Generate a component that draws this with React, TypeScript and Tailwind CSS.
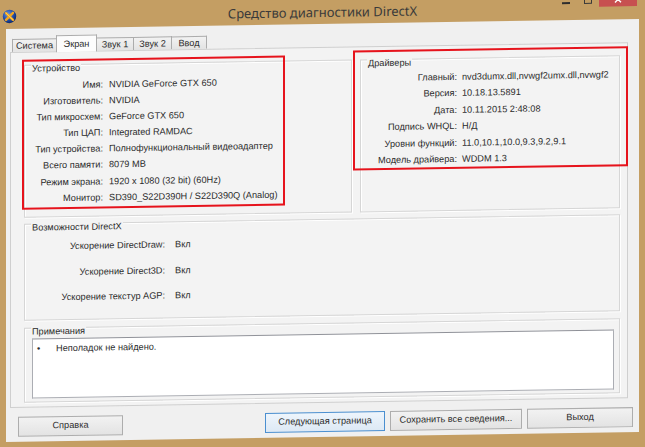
import React from 'react';

const ui = "font-['Liberation_Sans',Arial,sans-serif] text-[9.2px] text-[#2b2b2b]";

const deviceRows: [string, string][] = [
  ['Имя:', 'NVIDIA GeForce GTX 650'],
  ['Изготовитель:', 'NVIDIA'],
  ['Тип микросхем:', 'GeForce GTX 650'],
  ['Тип ЦАП:', 'Integrated RAMDAC'],
  ['Тип устройства:', 'Полнофункциональный видеоадаптер'],
  ['Всего памяти:', '8079 MB'],
  ['Режим экрана:', '1920 x 1080 (32 bit) (60Hz)'],
  ['Монитор:', 'SD390_S22D390H / S22D390Q (Analog)'],
];

const driverRows: [string, string][] = [
  ['Главный:', 'nvd3dumx.dll,nvwgf2umx.dll,nvwgf2'],
  ['Версия:', '10.18.13.5891'],
  ['Дата:', '10.11.2015 2:48:08'],
  ['Подпись WHQL:', 'Н/Д'],
  ['Уровни функций:', '11.0,10.1,10.0,9.3,9.2,9.1'],
  ['Модель драйвера:', 'WDDM 1.3'],
];

const dxRows: [string, string][] = [
  ['Ускорение DirectDraw:', 'Вкл'],
  ['Ускорение Direct3D:', 'Вкл'],
  ['Ускорение текстур AGP:', 'Вкл'],
];

function Group({ label, className, children }: { label: string; className: string; children?: React.ReactNode }) {
  return (
    <div className={`relative border border-[#d6d6d6] shadow-[inset_1px_1px_0_#fff,1px_1px_0_#fff] ${className}`}>
      <span className="absolute -top-[2px] left-[6px] px-[1px] bg-[#f3f3f3] leading-[11px]">{label}</span>
      {children}
    </div>
  );
}

function DxIcon() {
  return (
    <svg width="15" height="15" viewBox="0 0 16 16">
      <defs>
        <radialGradient id="dxg" cx="0.4" cy="0.35" r="0.7">
          <stop offset="0" stopColor="#6f9be0" />
          <stop offset="0.6" stopColor="#1f4aa8" />
          <stop offset="1" stopColor="#0c245e" />
        </radialGradient>
      </defs>
      <circle cx="8" cy="8" r="7.2" fill="url(#dxg)" />
      <path d="M4.3 4.3 L11.7 11.7 M11.7 4.3 L4.3 11.7" stroke="#f2a51e" strokeWidth="2.6" strokeLinecap="round" />
      <path d="M4.3 4.3 L11.7 11.7" stroke="#ffd35a" strokeWidth="1" strokeLinecap="round" />
    </svg>
  );
}

function Tab({ label, w, active }: { label: string; w: string; active?: boolean }) {
  if (active) {
    return (
      <div className={`${w} relative z-10 -mb-px -ml-px h-[17px] border border-b-0 border-[#acacac] bg-[#fcfcfc] flex items-start justify-center pt-[3px] leading-[11px]`}>
        {label}
      </div>
    );
  }
  return (
    <div className={`${w} -ml-px first:ml-0 h-[13px] border border-b-0 border-[#acacac] bg-gradient-to-b from-[#f2f2f2] to-[#e3e3e3] flex items-center justify-center leading-[11px]`}>
      {label}
    </div>
  );
}

function Button({ label, w, isDefault }: { label: string; w: string; isDefault?: boolean }) {
  return (
    <div
      className={`${w} h-[20px] flex items-center justify-center border ${
        isDefault
          ? 'border-[#4a8fd0] bg-gradient-to-b from-[#eef5fc] to-[#dde9f5]'
          : 'border-[#adadad] bg-gradient-to-b from-[#f2f2f2] to-[#e3e3e3]'
      }`}
    >
      {label}
    </div>
  );
}

export default function App() {
  return (
    <div className={`w-[645px] h-[447px] overflow-hidden bg-[#c49e63] ${ui}`}>
      <div className="relative w-[645px] h-[447px] skew-y-[-0.9deg]">
        {/* title bar */}
        <div className="h-[24px] grid grid-cols-[1fr_auto_1fr] items-start">
          <div className="ml-[2px] mt-[4px]">
            <DxIcon />
          </div>
          <div className="font-['Noto_Sans','Liberation_Sans',sans-serif] text-[13px] leading-[24px] text-[#3a3a3a]">
            Средство диагностики DirectX
          </div>
          <div className="justify-self-end flex items-start mr-[8px]">
            <div className="mt-[6px] w-[8px] h-[2px] bg-[#2e2e2e]" />
            <div className="ml-[14px] w-[8px] h-[8px] border border-[#3a3a3a] border-t-2" />
            <div className="ml-[7px] -mt-[10px] w-[38px] h-[21px] bg-[#c75050] flex justify-center pt-[10px]">
              <svg width="8" height="8" viewBox="0 0 8 8">
                <path d="M1 1 L7 7 M7 1 L1 7" stroke="#fff" strokeWidth="1.4" />
              </svg>
            </div>
          </div>
        </div>

        {/* client area */}
        <div className="mx-[6px] h-[413px] bg-[#f0f0f0] pt-[7px] pl-[4px] pr-[11px] flex flex-col">
          <div className="h-[16px] flex items-end pl-[2px]">
            <Tab label="Система" w="w-[45px]" />
            <Tab label="Экран" w="w-[41px]" active />
            <Tab label="Звук 1" w="w-[38px]" />
            <Tab label="Звук 2" w="w-[39px]" />
            <Tab label="Ввод" w="w-[36px]" />
          </div>

          <div className="h-[356px] border border-[#cfcfcf] bg-[#f3f3f3] pl-[13px] pr-[7px] pt-[12px] flex flex-col">
            <div className="flex gap-[8px] h-[153px]">
              <Group label="Устройство" className="w-[328px] h-[153px]">
                <div className="grid grid-cols-[78px_1fr] gap-x-[6px] auto-rows-[16.1px] leading-[16px] pt-[12px]">
                  {deviceRows.map(([k, v]) => (
                    <React.Fragment key={k}>
                      <div className="text-right whitespace-nowrap">{k}</div>
                      <div className="whitespace-nowrap">{v}</div>
                    </React.Fragment>
                  ))}
                </div>
              </Group>
              <Group label="Драйверы" className="w-[260px] h-[153px]">
                <div className="grid grid-cols-[96px_1fr] gap-x-[5px] auto-rows-[16.4px] leading-[16px] pt-[10px]">
                  {driverRows.map(([k, v]) => (
                    <React.Fragment key={k}>
                      <div className="text-right whitespace-nowrap">{k}</div>
                      <div className="whitespace-nowrap">{v}</div>
                    </React.Fragment>
                  ))}
                </div>
              </Group>
            </div>

            <Group label="Возможности DirectX" className="mt-[6px] w-[596px] h-[97px]">
              <div className="grid grid-cols-[140px_1fr] gap-x-[10px] auto-rows-[25.5px] leading-[25px] pt-[10px]">
                {dxRows.map(([k, v]) => (
                  <React.Fragment key={k}>
                    <div className="text-right whitespace-nowrap">{k}</div>
                    <div>{v}</div>
                  </React.Fragment>
                ))}
              </div>
            </Group>

            <Group label="Примечания" className="mt-[7px] w-[596px] h-[75px]">
              <div className="mt-[10px] ml-[7px] mr-[5px] h-[60px] bg-white border border-[#abadb3] border-t-[#8f9198] flex items-start pt-[4px]">
                <span className="ml-[4px] w-[19px] leading-[11px]">•</span>
                <span className="leading-[11px]">Неполадок не найдено.</span>
              </div>
            </Group>
          </div>

          <div className="mt-[9px] flex items-start">
            <div className="ml-[8px]">
              <Button label="Справка" w="w-[105px]" />
            </div>
            <div className="flex-1" />
            <div className="flex gap-[5px] mr-[-5px]">
              <Button label="Следующая страница" w="w-[120px]" isDefault />
              <Button label="Сохранить все сведения..." w="w-[132px]" />
              <Button label="Выход" w="w-[106px]" />
            </div>
          </div>
        </div>

        {/* red annotation frames */}
        <div className="absolute left-[22px] top-[55px] w-[263px] h-[150px] border-2 border-[#e6131c]" />
        <div className="absolute left-[353px] top-[51px] w-[275px] h-[120px] border-2 border-[#e6131c]" />
      </div>
    </div>
  );
}
